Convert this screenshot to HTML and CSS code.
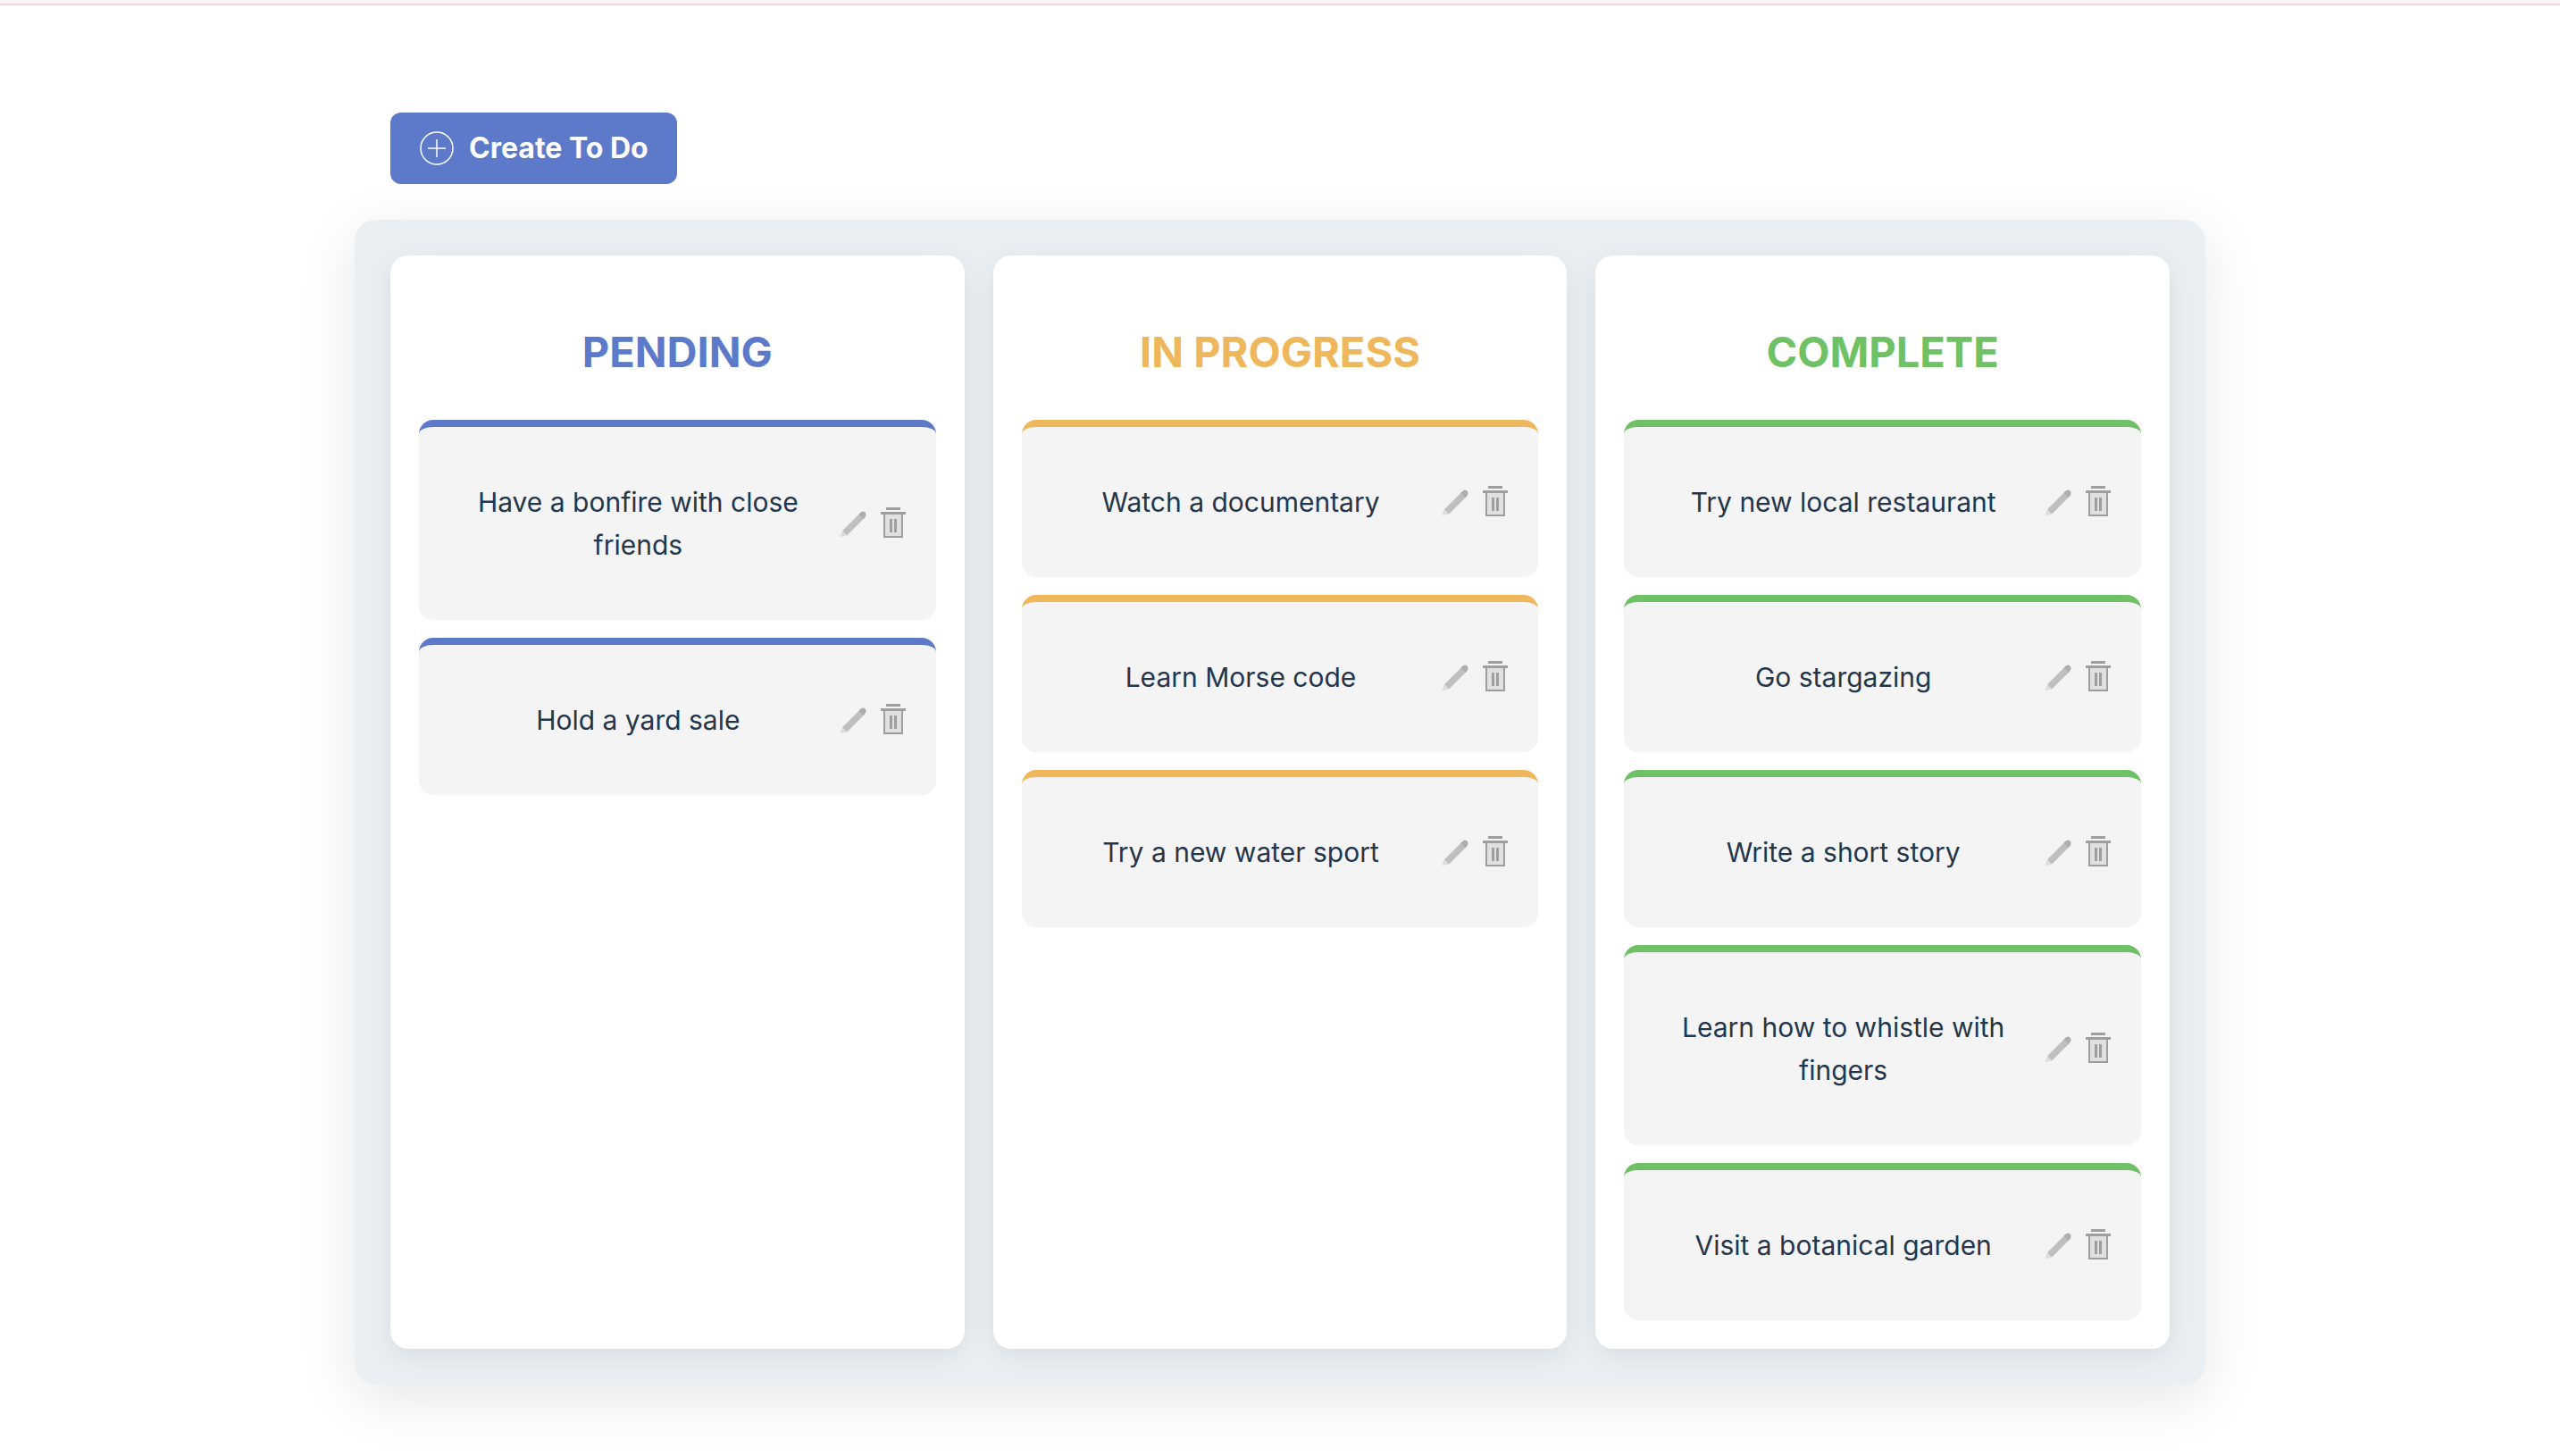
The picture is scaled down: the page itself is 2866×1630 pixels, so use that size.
FILE: index.html
```html
<!DOCTYPE html>
<html lang="en">
<head>
<meta charset="utf-8">
<title>To Do Board</title>
<link rel="stylesheet" href="styles.css">
</head>
<body>
<svg class="sprite" aria-hidden="true">
  <symbol id="pencil" viewBox="0 0 40 40">
    <path d="M4.500 35 7 28.200 12.200 33.400Z" fill="#dcdcdc"/>
    <path d="M7 28.200 27 8.200 32.200 13.400 12.200 33.400Z" fill="#bfbfbf"/>
    <path d="M25.500 9.700 28 7.200Q30.500 5.500 32.500 7.500 34.500 9.700 32.700 12.500L30.700 14.900Z" fill="#adadad"/>
  </symbol>
  <symbol id="trash" viewBox="0 0 40 40">
    <path d="M10 8H30V35H10Z" fill="#e0e0e0" stroke="#9e9e9e" stroke-width="2"/>
    <path d="M12 2H28V5H12ZM6 7H34V10H6ZM16 15H19V30H16ZM21 15H24V30H21Z" fill="#9e9e9e"/>
  </symbol>
</svg>
<div class="topline"></div>
<main class="page">
  <div class="toolbar">
    <button class="create" type="button">
      <svg class="create-icon" viewBox="0 0 40 40" fill="none" stroke="#fff" aria-hidden="true"><circle cx="20" cy="20" r="18" stroke-width="1.500"/><path d="M20 10V30M10 20H30" stroke-width="1.500"/></svg>
      Create To Do
    </button>
  </div>
  <div class="board">
    <section class="column pending">
      <h2>Pending</h2>
      <ul class="cards">
        <li class="card"><p>Have a bonfire with close friends</p><div class="actions"><button type="button" aria-label="Edit"><svg><use href="#pencil"/></svg></button><button type="button" aria-label="Delete"><svg><use href="#trash"/></svg></button></div></li>
        <li class="card"><p>Hold a yard sale</p><div class="actions"><button type="button" aria-label="Edit"><svg><use href="#pencil"/></svg></button><button type="button" aria-label="Delete"><svg><use href="#trash"/></svg></button></div></li>
      </ul>
    </section>
    <section class="column progress">
      <h2>In Progress</h2>
      <ul class="cards">
        <li class="card"><p>Watch a documentary</p><div class="actions"><button type="button" aria-label="Edit"><svg><use href="#pencil"/></svg></button><button type="button" aria-label="Delete"><svg><use href="#trash"/></svg></button></div></li>
        <li class="card"><p>Learn Morse code</p><div class="actions"><button type="button" aria-label="Edit"><svg><use href="#pencil"/></svg></button><button type="button" aria-label="Delete"><svg><use href="#trash"/></svg></button></div></li>
        <li class="card"><p>Try a new water sport</p><div class="actions"><button type="button" aria-label="Edit"><svg><use href="#pencil"/></svg></button><button type="button" aria-label="Delete"><svg><use href="#trash"/></svg></button></div></li>
      </ul>
    </section>
    <section class="column complete">
      <h2>Complete</h2>
      <ul class="cards">
        <li class="card"><p>Try new local restaurant</p><div class="actions"><button type="button" aria-label="Edit"><svg><use href="#pencil"/></svg></button><button type="button" aria-label="Delete"><svg><use href="#trash"/></svg></button></div></li>
        <li class="card"><p>Go stargazing</p><div class="actions"><button type="button" aria-label="Edit"><svg><use href="#pencil"/></svg></button><button type="button" aria-label="Delete"><svg><use href="#trash"/></svg></button></div></li>
        <li class="card"><p>Write a short story</p><div class="actions"><button type="button" aria-label="Edit"><svg><use href="#pencil"/></svg></button><button type="button" aria-label="Delete"><svg><use href="#trash"/></svg></button></div></li>
        <li class="card"><p>Learn how to whistle with fingers</p><div class="actions"><button type="button" aria-label="Edit"><svg><use href="#pencil"/></svg></button><button type="button" aria-label="Delete"><svg><use href="#trash"/></svg></button></div></li>
        <li class="card"><p>Visit a botanical garden</p><div class="actions"><button type="button" aria-label="Edit"><svg><use href="#pencil"/></svg></button><button type="button" aria-label="Delete"><svg><use href="#trash"/></svg></button></div></li>
      </ul>
    </section>
  </div>
</main>
</body>
</html>
```

FILE: styles.css
```css
* {
  box-sizing: border-box;
}

body {
  margin: 0;
  background: #fff;
  color: #24364b;
  font-family: Inter, "Liberation Sans", sans-serif;
  font-size: 30px;
  line-height: 48px;
}

.sprite {
  display: none;
}

.topline {
  height: 6px;
  background: #fef6f4;
  border-bottom: 2px solid #f0d9dd;
}

.page {
  max-width: 2072px;
  margin: 0 auto;
  padding: 120px 0 80px;
}

.toolbar {
  padding: 0 40px 40px;
}

.create {
  display: flex;
  align-items: center;
  gap: 16px;
  height: 80px;
  padding: 0 32px;
  border: 0;
  border-radius: 12px;
  background: #5c7ac9;
  color: #fff;
  font: inherit;
  font-size: 32px;
  font-weight: 700;
}

.create-icon {
  width: 40px;
  height: 40px;
}

.board {
  display: grid;
  grid-template-columns: repeat(3, 1fr);
  gap: 32px;
  padding: 40px;
  border-radius: 24px;
  background: #eaeff3;
  box-shadow: 0 16px 64px rgba(0, 0, 0, 0.1);
}

.column {
  padding: 32px;
  border-radius: 20px;
  background: #fff;
  box-shadow: 0 8px 32px rgba(0, 0, 0, 0.08);
}

.pending {
  --accent: #5c7ac9;
}

.progress {
  --accent: #eeb75c;
}

.complete {
  --accent: #6ec164;
}

h2 {
  margin: 40px 0;
  color: var(--accent);
  font-size: 47px;
  font-weight: 700;
  line-height: 72px;
  text-align: center;
  text-transform: uppercase;
}

.cards {
  display: grid;
  gap: 20px;
  margin: 0;
  padding: 0;
  list-style: none;
}

.card {
  display: flex;
  align-items: center;
  padding: 60px 28px 60px 24px;
  border-top: 8px solid var(--accent);
  border-radius: 16px;
  background: #f4f4f4;
}

.card p {
  flex: 1;
  margin: 0;
  padding: 0 24px;
  text-align: center;
}

.actions {
  display: flex;
  gap: 4px;
}

.actions button {
  width: 40px;
  height: 40px;
  padding: 0;
  border: 0;
  background: none;
}

.actions svg {
  display: block;
  width: 40px;
  height: 40px;
}
```
